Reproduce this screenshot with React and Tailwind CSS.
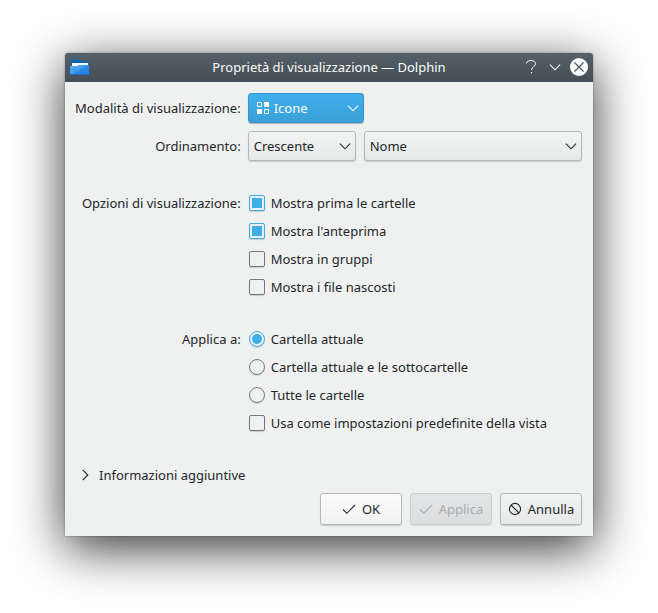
import React, { useState } from "react";

const viewOptions = [
  { id: "folders-first", label: "Mostra prima le cartelle", checked: true },
  { id: "preview", label: "Mostra l'anteprima", checked: true },
  { id: "groups", label: "Mostra in gruppi", checked: false },
  { id: "hidden", label: "Mostra i file nascosti", checked: false },
];

const scopes = [
  { id: "current", label: "Cartella attuale" },
  { id: "subfolders", label: "Cartella attuale e le sottocartelle" },
  { id: "all", label: "Tutte le cartelle" },
];

function FolderIcon() {
  return (
    <svg width="20" height="18" viewBox="0 0 20 18" aria-hidden="true">
      <defs>
        <linearGradient id="folder" x1="0" y1="0" x2="1" y2="1">
          <stop offset="0" stopColor="#5fb3f5" />
          <stop offset="0.5" stopColor="#3d99ea" />
          <stop offset="0.5" stopColor="#2b8ae6" />
          <stop offset="1" stopColor="#1d7fe4" />
        </linearGradient>
      </defs>
      <path d="M1 1h7l2 2h8v8H1z" fill="#0f66ad" />
      <path d="M2 5h16v4H2z" fill="#f4f8fb" />
      <path d="M0 8h7l2-1h10v10H0z" fill="url(#folder)" />
      <path d="M0 16h19v1H0z" fill="#1d6fc0" />
    </svg>
  );
}

function Chevron({ className }) {
  return (
    <svg
      className={className}
      width="12"
      height="12"
      viewBox="0 0 12 12"
      fill="none"
      stroke="currentColor"
      strokeWidth="1.1"
      aria-hidden="true"
    >
      <path d="M0.900 3.700 6 8.800l5.100-5.100" />
    </svg>
  );
}

function CheckIcon() {
  return (
    <svg width="14" height="14" viewBox="0 0 14 14" fill="none" stroke="currentColor" strokeWidth="1.1" aria-hidden="true">
      <path d="M1 7.500 4.800 11.300 13 3" />
    </svg>
  );
}

function CancelIcon() {
  return (
    <svg width="14" height="14" viewBox="0 0 14 14" fill="none" stroke="currentColor" strokeWidth="1.1" aria-hidden="true">
      <circle cx="7" cy="7" r="5.600" />
      <path d="m3 3 8 8" />
    </svg>
  );
}

function Combo({ id, label, options, className }) {
  return (
    <div className={`relative ${className}`}>
      <select
        id={id}
        aria-label={label}
        className="h-[30px] w-full appearance-none rounded-[3px] border border-[#b4b6b7] bg-linear-to-b from-[#f2f3f3] to-[#e7e8e8] pr-6 pl-[5px] shadow-[0_1px_1px_rgba(0,0,0,0.16)]"
      >
        {options.map((o) => (
          <option key={o}>{o}</option>
        ))}
      </select>
      <Chevron className="pointer-events-none absolute top-[9px] right-[5px]" />
    </div>
  );
}

function CheckRow({ id, label, checked }) {
  return (
    <div className="flex h-5 items-center gap-1.5">
      <input
        id={id}
        type="checkbox"
        defaultChecked={checked}
        className="size-4 appearance-none rounded-[2px] border border-[#76797b] bg-clip-content p-[2px] shadow-[0_1px_1px_rgba(0,0,0,0.16)] checked:border-[#3daee9] checked:bg-[#3daee9]"
      />
      <label htmlFor={id}>{label}</label>
    </div>
  );
}

function TitleBar() {
  return (
    <header className="grid h-[29px] grid-cols-[1fr_auto_1fr] items-center rounded-t-[3px] bg-linear-to-b from-[#566069] to-[#454e56] px-[5px] pb-0.5 text-[#fcfcfc]">
      <FolderIcon />
      <h1>Proprietà di visualizzazione — Dolphin</h1>
      <div className="flex items-center justify-end gap-1.5">
        <button type="button" aria-label="Aiuto" className="flex size-[18px] items-center justify-center">
          <svg width="18" height="18" viewBox="0 0 18 18" fill="none" stroke="currentColor">
            <path d="M4.500 5.500C4.500 3.500 6.500 2.500 9 2.500s4.500 1.200 4.500 3.300c0 2.700-4 3-4 6.200" />
            <path d="M8.900 14h1.300v1.300H8.900z" fill="currentColor" stroke="none" />
          </svg>
        </button>
        <button type="button" aria-label="Riduci" className="flex size-[18px] items-center justify-center">
          <Chevron />
        </button>
        <button
          type="button"
          aria-label="Chiudi"
          className="flex size-[18px] items-center justify-center rounded-full bg-[#fcfcfc] text-[#4a535b]"
        >
          <svg width="18" height="18" viewBox="0 0 18 18" fill="none" stroke="currentColor" strokeWidth="1.2">
            <path d="m4.500 4.500 9 9m0-9-9 9" />
          </svg>
        </button>
      </div>
    </header>
  );
}

function App() {
  const [scope, setScope] = useState("current");

  return (
    <div className="px-[65px] pt-[53px] pb-[77px] font-['Noto_Sans',sans-serif] text-[13px] leading-5 text-[#232629]">
      <div className="rounded-t-[3px] bg-[#eff1f0] shadow-[0_12px_50px_rgba(0,0,0,0.8),0_0_2px_rgba(0,0,0,0.4)]">
        <TitleBar />

        <form className="pt-[11px] pr-[11px] pb-[11px] pl-2.5" onSubmit={(e) => e.preventDefault()}>
          <div className="grid grid-cols-[auto_1fr] gap-x-[7px]">
            <label htmlFor="mode" className="self-center text-right">
              Modalità di visualizzazione:
            </label>
            <div className="relative w-[116px]">
              <select
                id="mode"
                className="h-[30px] w-full appearance-none rounded-[3px] border border-[#3594c9] bg-linear-to-b from-[#40b0ed] to-[#3a9fd6] pr-6 pl-[25px] text-[#fcfcfc] shadow-[0_1px_1px_rgba(0,0,0,0.25)]"
              >
                <option>Icone</option>
                <option>Compatta</option>
                <option>Dettagli</option>
              </select>
              <svg
                className="pointer-events-none absolute top-[9px] left-[9px] text-[#fcfcfc]"
                width="12"
                height="12"
                viewBox="0 0 12 12"
                fill="none"
                stroke="currentColor"
                aria-hidden="true"
              >
                <path d="M.5.5h4v4h-4zM7.500 7.500h4v4h-4z" />
                <path d="M7 0h5v5H7zM0 7h5v5H0z" fill="currentColor" stroke="none" />
              </svg>
              <Chevron className="pointer-events-none absolute top-[9px] right-[5px] text-[#fcfcfc]" />
            </div>

            <label htmlFor="order" className="mt-2 self-center text-right">
              Ordinamento:
            </label>
            <div className="mt-2 flex gap-2">
              <Combo id="order" options={["Crescente", "Decrescente"]} className="w-[108px]" />
              <Combo id="role" label="Ordina per" options={["Nome", "Dimensione", "Data"]} className="flex-1" />
            </div>

            <span id="options-label" className="mt-8 text-right">
              Opzioni di visualizzazione:
            </span>
            <div role="group" aria-labelledby="options-label" className="mt-8 flex flex-col gap-2 pl-px">
              {viewOptions.map((o) => (
                <CheckRow key={o.id} {...o} />
              ))}
            </div>

            <span id="scope-label" className="mt-8 text-right">
              Applica a:
            </span>
            <div role="group" aria-labelledby="scope-label" className="mt-8 flex flex-col gap-2 pl-px">
              {scopes.map((s) => (
                <div key={s.id} className="flex h-5 items-center gap-1.5">
                  <input
                    id={s.id}
                    type="radio"
                    name="scope"
                    checked={scope === s.id}
                    onChange={() => setScope(s.id)}
                    className="size-4 appearance-none rounded-full border border-[#76797b] bg-clip-content p-[2px] shadow-[0_1px_1px_rgba(0,0,0,0.12)] checked:border-[#3daee9] checked:bg-[#3daee9]"
                  />
                  <label htmlFor={s.id}>{s.label}</label>
                </div>
              ))}
              <CheckRow id="default" label="Usa come impostazioni predefinite della vista" checked={false} />
            </div>
          </div>

          <button type="button" aria-expanded="false" className="mt-8 flex h-5 items-center gap-2 pl-1">
            <Chevron className="-rotate-90" />
            Informazioni aggiuntive
          </button>

          <div className="mt-2 flex justify-end gap-2">
            <button
              type="submit"
              className="flex h-8 w-[82px] items-center justify-center gap-1.5 rounded-[3px] border border-[#b4b6b7] bg-linear-to-b from-[#fcfcfc] to-[#f1f2f2] shadow-[0_1px_1px_rgba(0,0,0,0.16)]"
            >
              <CheckIcon />
              OK
            </button>
            <button
              type="button"
              disabled
              className="flex h-8 w-[82px] items-center justify-center gap-1.5 rounded-[3px] border border-[#cbcdce] bg-linear-to-b from-[#e4e5e7] to-[#dcdddf] text-[#a8abad] shadow-[0_1px_1px_rgba(0,0,0,0.08)]"
            >
              <CheckIcon />
              Applica
            </button>
            <button
              type="button"
              className="flex h-8 w-[82px] items-center justify-center gap-1.5 rounded-[3px] border border-[#b4b6b7] bg-linear-to-b from-[#f2f3f3] to-[#e7e8e8] shadow-[0_1px_1px_rgba(0,0,0,0.16)]"
            >
              <CancelIcon />
              Annulla
            </button>
          </div>
        </form>
      </div>
    </div>
  );
}

export default App;
